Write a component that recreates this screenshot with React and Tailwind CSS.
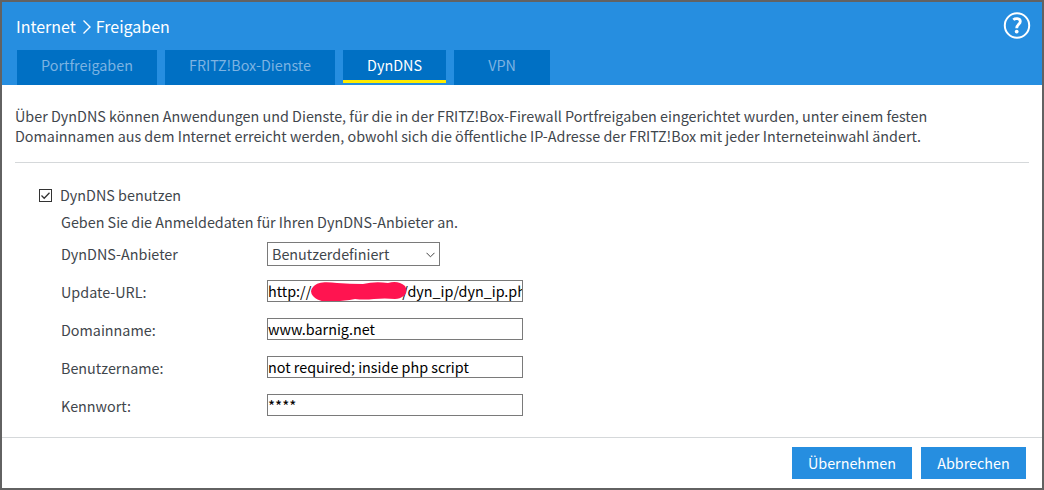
import React from "react";

const tabs = [
  { label: "Portfreigaben", width: "w-[140px]" },
  { label: "FRITZ!Box-Dienste", width: "w-[170px]" },
  { label: "DynDNS", width: "w-[103px]", active: true },
  { label: "VPN", width: "w-[96px]" },
];

function Tab({ label, width, active }) {
  return (
    <div
      className={`${width} flex justify-center bg-[#0070c4] pt-[5px] leading-[20px] ${
        active ? "h-[33px] border-b-3 border-[#ffeb00] text-white" : "h-[35px] text-[#7cb3e2]"
      }`}
    >
      {label}
    </div>
  );
}

function Row({ label, children }) {
  return (
    <div className="flex h-[38px] items-start">
      <div className="w-[206px] pt-[2px] leading-[20px]">{label}</div>
      <div className="relative flex h-[22px] w-[256px] items-center overflow-hidden border border-[#7a7a7a] whitespace-nowrap text-black leading-[20px]">
        {children}
      </div>
    </div>
  );
}

export default function App() {
  return (
    <div className="flex h-[490px] w-[1044px] flex-col border-2 border-[#626262] bg-white font-['Noto_Sans_CJK_SC',sans-serif] text-[14.35px] whitespace-nowrap text-[#3f464c]">
      <header className="flex h-[83px] shrink-0 flex-col bg-[#268ee0] pl-[15px]">
        <div className="flex h-[48px] items-start justify-between pr-[11px]">
          <div className="flex items-center pt-[13px] text-[16px] leading-[22px] text-white">
            <span className="-ml-px">Internet</span>
            <svg className="mt-[2px] mr-[4px] ml-[6px]" width="10" height="16" viewBox="0 0 10 16" fill="none" stroke="white" strokeWidth="1.4">
              <path d="M1.5 1.5L8 8L1.5 14.5" />
            </svg>
            <span>Freigaben</span>
          </div>
          <svg className="mt-[9px]" width="28" height="29" viewBox="0 0 28 29" fill="none" stroke="white">
            <circle cx="14" cy="14.5" r="12.2" strokeWidth="2" />
            <path d="M10.3 8.7C12 7.2 17.3 6.7 17.3 10.4C17.3 13.2 13.7 13.3 13.7 17.2" strokeWidth="2.8" />
            <circle cx="13.7" cy="20.6" r="1.9" fill="white" stroke="none" />
          </svg>
        </div>
        <nav className="flex items-start gap-2">
          {tabs.map((t) => (
            <Tab key={t.label} {...t} />
          ))}
        </nav>
      </header>

      <main className="flex h-[352px] shrink-0 flex-col px-[13px] pt-[21px]">
        <div className="h-[57px] border-b border-[#d5d8da] leading-[20px]">
          <p>Über DynDNS können Anwendungen und Dienste, für die in der FRITZ!Box-Firewall Portfreigaben eingerichtet wurden, unter einem festen</p>
          <p>Domainnamen aus dem Internet erreicht werden, obwohl sich die öffentliche IP-Adresse der FRITZ!Box mit jeder Interneteinwahl ändert.</p>
        </div>
        <div className="mt-[22px] ml-[24px] flex h-[20px] items-center leading-[20px]">
          <svg width="13" height="13" viewBox="0 0 13 13" fill="none" stroke="#333">
            <rect x=".5" y=".5" width="12" height="12" />
            <path d="M2.5 6.5L5.2 9.2L10.5 3.7" strokeWidth="1.3" />
          </svg>
          <span className="ml-[8px]">DynDNS benutzen</span>
        </div>
        <div className="ml-[46px]">
          <div className="mt-[7px] leading-[20px]">Geben Sie die Anmeldedaten für Ihren DynDNS-Anbieter an.</div>
          <div className="mt-[10px] flex h-[38px]">
            <div className="w-[206px] pt-[2px] leading-[20px]">DynDNS-Anbieter</div>
            <div className="flex h-[24px] w-[173px] items-center justify-between border border-[#7a7a7a] pr-[4px] pl-[4px] leading-[22px]">
              <span>Benutzerdefiniert</span>
              <svg className="mt-[2px]" width="9" height="6" viewBox="0 0 9 6" fill="none" stroke="#444">
                <path d="M.5 .8L4.5 4.8L8.5 .8" />
              </svg>
            </div>
          </div>
          <Row label="Update-URL:">
            <span>http://</span>
            <span className="w-[91px] shrink-0" />
            <span>/dyn_ip/dyn_ip.php</span>
            <svg className="absolute top-0 left-[42px] blur-[0.6px]" width="100" height="22" viewBox="0 0 100 22">
              <path d="M3 6C8 0 18 1 27 2Q40 3 53 3Q65 0 78 2Q88 -1 95 5C99 12 94 17 85 18Q75 17 64 18Q54 19 45 18Q34 20 26 20C17 22 7 20 3 15Q-1 10 3 6Z" fill="#ff1450" />
            </svg>
          </Row>
          <Row label="Domainname:">www.barnig.net</Row>
          <Row label="Benutzername:">not required; inside php script</Row>
          <Row label="Kennwort:">
            <span className="text-[15.2px]">****</span>
          </Row>
        </div>
      </main>

      <footer className="flex flex-1 items-start justify-end gap-[9px] border-t border-[#d5d8da] pt-[9px] pr-[16px]">
        <button className="h-[32px] w-[120px] bg-[#268ee0] leading-[32px] text-white">Übernehmen</button>
        <button className="h-[32px] w-[105px] bg-[#268ee0] leading-[32px] text-white">Abbrechen</button>
      </footer>
    </div>
  );
}
